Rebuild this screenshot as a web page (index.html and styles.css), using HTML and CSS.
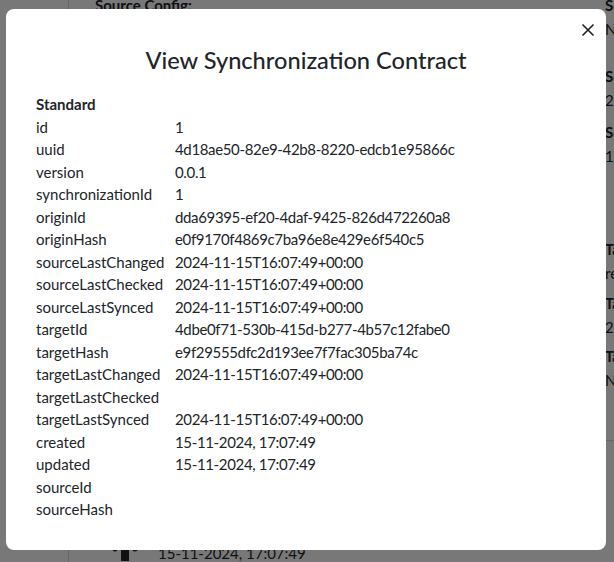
FILE: index.html
```html
<!DOCTYPE html>
<html lang="en">
<head>
<meta charset="utf-8">
<title>View Synchronization Contract</title>
<link rel="stylesheet" href="styles.css">
</head>
<body>
<div class="page">
  <aside class="sidebar"></aside>
  <main class="content">
    <section class="col-main">
      <h3 class="section-title">Source Config:</h3>
      <p class="filler">Source configuration</p>
      <p class="filler">Target configuration</p>
      <p class="filler">Mapping</p>
      <p class="filler">Rules</p>
      <p class="filler">Logs</p>
      <p class="filler">Contracts</p>
      <p class="filler">Synchronization</p>
      <p class="filler">Details</p>
      <p class="filler">Status</p>
      <p class="filler">Created</p>
      <p class="filler">Updated</p>
      <p class="filler">History</p>
      <p class="filler">Objects</p>
      <p class="filler">Actions</p>
      <p class="filler">Events</p>
      <p class="filler">Hashes</p>
      <p class="filler">Results</p>
      <p class="filler">Sources</p>
      <p class="filler">Targets</p>
      <p class="filler">Notes</p>
      <p class="filler">Notes</p>
      <p class="filler">Logs</p>
      <div class="log-row">
        <svg class="log-icon" width="26" height="16" viewBox="0 0 26 16"><circle cx="3" cy="4" r="2.5" fill="#212529"/><rect x="9" y="1" width="8" height="15" fill="#212529"/><circle cx="23" cy="4" r="2.5" fill="#212529"/></svg>
        <span>15-11-2024, 17:07:49</span>
      </div>
    </section>
    <section class="col-side">
      <div class="side-item side-first"><b>Source</b><span>N/A</span></div>
      <div class="side-item side-2"><b>Source</b><span>2024</span></div>
      <div class="side-item side-3"><b>Source</b><span>1</span></div>
      <div class="side-item side-4"><b>Target</b><span>rest</span></div>
      <div class="side-item side-5"><b>Target</b><span>2024</span></div>
      <div class="side-item side-6"><b>Target</b><span>N/A</span></div>
      <hr class="side-rule">
    </section>
  </main>
</div>

<div class="backdrop">
  <div class="modal" role="dialog" aria-labelledby="modal-title">
    <button class="close-btn" aria-label="Close">
      <svg width="14" height="14" viewBox="0 0 14 14"><path d="M1.5 1.5 L12.5 12.5 M12.5 1.5 L1.5 12.5" stroke="#222" stroke-width="1.6" fill="none"/></svg>
    </button>
    <h2 class="modal-title" id="modal-title">View Synchronization Contract</h2>
    <div class="props">
      <div class="props-head">Standard</div>
      <div class="k">id</div><div class="v">1</div>
      <div class="k">uuid</div><div class="v">4d18ae50-82e9-42b8-8220-edcb1e95866c</div>
      <div class="k">version</div><div class="v">0.0.1</div>
      <div class="k">synchronizationId</div><div class="v">1</div>
      <div class="k">originId</div><div class="v">dda69395-ef20-4daf-9425-826d472260a8</div>
      <div class="k">originHash</div><div class="v">e0f9170f4869c7ba96e8e429e6f540c5</div>
      <div class="k">sourceLastChanged</div><div class="v">2024-11-15T16:07:49+00:00</div>
      <div class="k">sourceLastChecked</div><div class="v">2024-11-15T16:07:49+00:00</div>
      <div class="k">sourceLastSynced</div><div class="v">2024-11-15T16:07:49+00:00</div>
      <div class="k">targetId</div><div class="v">4dbe0f71-530b-415d-b277-4b57c12fabe0</div>
      <div class="k">targetHash</div><div class="v">e9f29555dfc2d193ee7f7fac305ba74c</div>
      <div class="k">targetLastChanged</div><div class="v">2024-11-15T16:07:49+00:00</div>
      <div class="k">targetLastChecked</div><div class="v"></div>
      <div class="k">targetLastSynced</div><div class="v">2024-11-15T16:07:49+00:00</div>
      <div class="k">created</div><div class="v">15-11-2024, 17:07:49</div>
      <div class="k">updated</div><div class="v">15-11-2024, 17:07:49</div>
      <div class="k">sourceId</div><div class="v"></div>
      <div class="k">sourceHash</div><div class="v"></div>
    </div>
  </div>
</div>
</body>
</html>
```

FILE: styles.css
```css
* { box-sizing: border-box; }

html, body {
  margin: 0;
  height: 562px;
  overflow: hidden;
}

body {
  font-family: "Lato", "Noto Sans", sans-serif;
  font-size: 15px;
  line-height: 22.5px;
  color: #212529;
  background: #fff;
}

/* underlying page */
.page {
  display: flex;
  height: 562px;
}

.sidebar {
  width: 69px;
  flex: none;
  border-right: 1px solid #d6d6d6;
}

.content {
  flex: 1;
  display: grid;
  grid-template-columns: 510px 200px;
  padding-left: 26px;
  margin-top: -7px;
}

.section-title {
  margin: 0;
  font-size: 15px;
  font-weight: 700;
  line-height: 24px;
}

.filler {
  margin: 0;
  line-height: 24px;
}

.log-row {
  display: flex;
  align-items: center;
  gap: 20px;
  padding-left: 17px;
  margin-top: -4px;
  line-height: 24px;
}

.col-side {
  display: flex;
  flex-direction: column;
}

.side-item {
  display: flex;
  flex-direction: column;
  line-height: 24px;
}

.side-item b { font-weight: 700; }

.side-first { margin-top: 0; }
.side-2 { margin-top: 23px; }
.side-3 { margin-top: 8px; }
.side-4 { margin-top: 69px; }
.side-5 { margin-top: 6px; }
.side-6 { margin-top: 5px; }

.side-rule {
  margin: 48px 0 0 -40px;
  border: 0;
  border-top: 1px solid #dcdcdc;
}

/* modal overlay */
.backdrop {
  position: fixed;
  inset: 0;
  background: rgba(0, 0, 0, 0.53);
  padding: 9px 8px 12px 6px;
}

.modal {
  position: relative;
  width: 600px;
  height: 541px;
  background: #fff;
  border-radius: 8px;
  padding: 35px 30px 0 30px;
}

.close-btn {
  position: absolute;
  top: 6px;
  right: 3px;
  width: 30px;
  height: 30px;
  border: 0;
  background: transparent;
  padding: 0;
  display: flex;
  align-items: center;
  justify-content: center;
  cursor: pointer;
}

.modal-title {
  margin: 0 0 17px;
  text-align: center;
  font-size: 23.6px;
  font-weight: 500;
  line-height: 32px;
}

.props {
  display: grid;
  grid-template-columns: 139px 1fr;
}

.props-head {
  grid-column: 1 / -1;
  font-weight: 700;
}

.k, .v {
  min-height: 22.5px;
  white-space: nowrap;
}

.v {
  letter-spacing: -0.35px;
}
```
